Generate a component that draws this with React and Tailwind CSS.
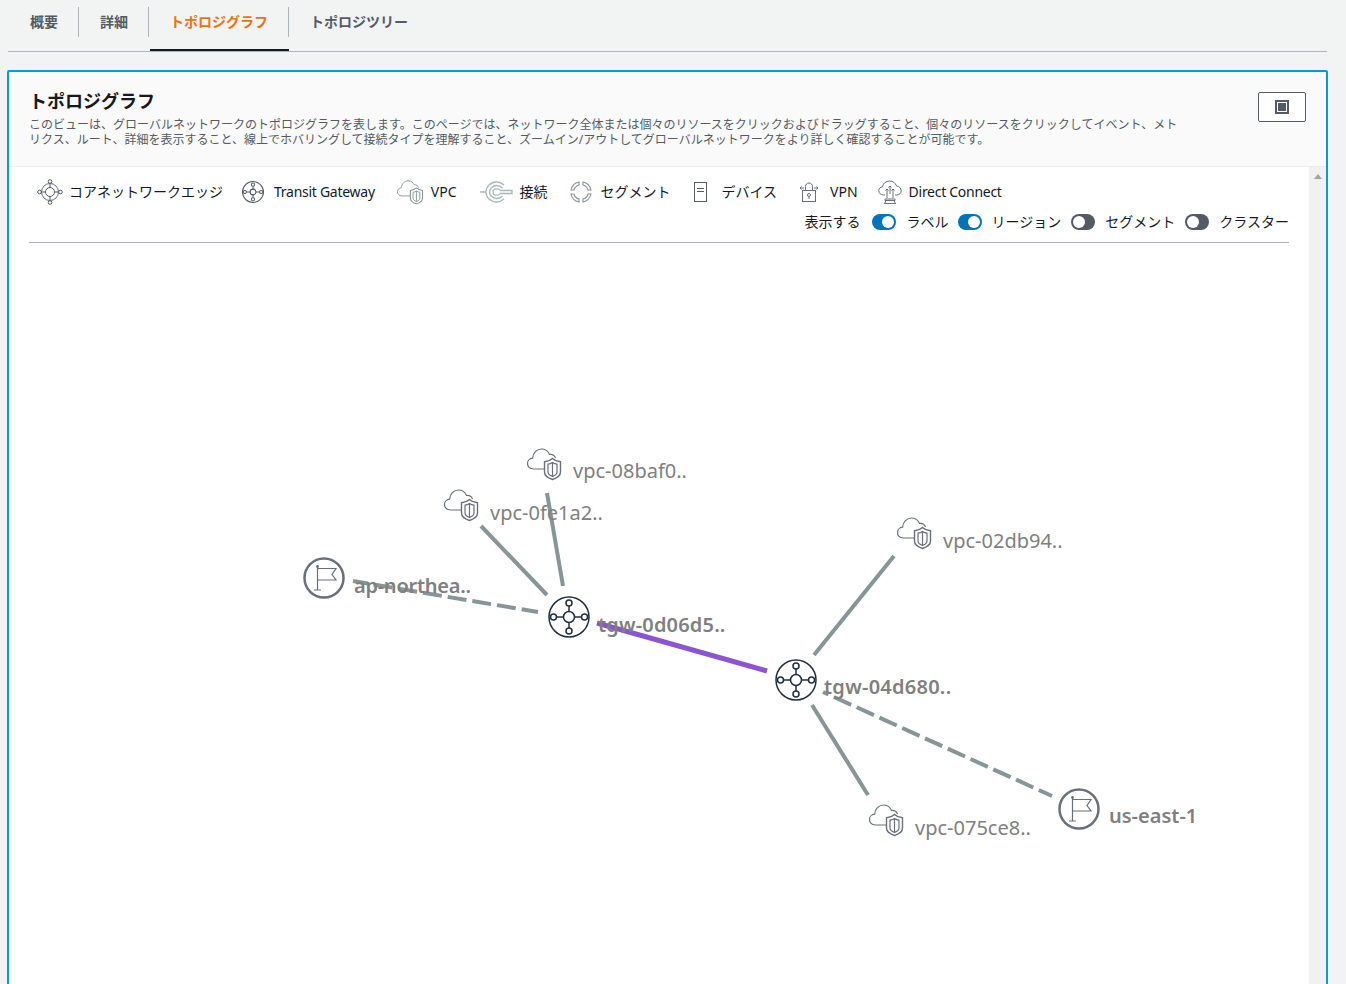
import React from 'react';

const TABS = [
  { label: '概要', pad: 'pl-[21px] pr-[20px]' },
  { label: '詳細', pad: 'pl-[21px] pr-[20px]' },
  { label: 'トポロジグラフ', pad: 'pl-[20px] pr-[20px]', active: true },
  { label: 'トポロジツリー', pad: 'px-[21px]', last: true },
];

const TransitGlyph = ({ stroke = '#232f3e', sw = 1.5 }) => (
  <g fill="none" stroke={stroke} strokeWidth={sw}>
    <circle r="20" />
    <circle r="5.5" />
    <circle cy="-14" r="3" />
    <circle cy="14" r="3" />
    <circle cx="-15.5" r="3" />
    <circle cx="15.5" r="3" />
    <path d="M0-11V-5.5M0 5.5V11M-12.5 0H-5.5M5.5 0H12.5" />
  </g>
);

// cloud with a shield, origin at the top left of a 34x32 box
const VpcGlyph = ({ stroke = '#879596' }) => (
  <g fill="none" stroke={stroke} strokeWidth="1.2">
    <path d="M17 21H6.500C2.500 21 0.500 18.500 0.500 15.500C0.500 12.500 2.800 10.400 5.600 10.200C5.800 5 10 1 14.500 1C18.500 1 21.200 3.400 22.400 6.400C25.500 6 27.500 7.500 28.500 10" />
    <path d="M25.500 10.500C23.500 12.500 20.500 13.500 17.500 13.800V24C17.500 27.500 21 30 25.500 31.500C30 30 33.500 27.500 33.500 24V13.800C30.500 13.500 27.500 12.500 25.500 10.500Z" strokeWidth="1.4" />
    <path d="M25.500 14.500C24 15.500 22.500 16 21 16.200V24C21 26 23 27.500 25.500 28.500C28 27.500 30 26 30 24V16.200C28.500 16 27 15.500 25.500 14.500ZM25.500 14.500V28.500" />
  </g>
);

const FlagGlyph = () => (
  <g fill="none" stroke="#687078">
    <circle r="19.500" strokeWidth="2.500" />
    <path d="M-6.500-11V12M-10 12H-3" strokeWidth="1.200" />
    <circle cx="-6.500" cy="-11.500" r="1.400" fill="#687078" strokeWidth="0" />
    <path d="M-6.500-9.500H12L8-3.500L12 2H-6.500" strokeWidth="1.200" />
  </g>
);

const CoreEdgeIcon = () => (
  <svg width="26" height="26" viewBox="-13 -13 26 26" fill="none" stroke="#545b64" strokeWidth="1">
    <circle r="4.500" />
    <circle r="8.500" stroke="#687078" />
    <g fill="#fff">
      <circle cy="-10.500" r="1.800" />
      <circle cy="10.500" r="1.800" />
      <circle cx="-10.500" r="1.800" />
      <circle cx="10.500" r="1.800" />
    </g>
    <path d="M0-8.500V-4.500M0 4.500V8.500M-8.500 0H-4.500M4.500 0H8.500" />
  </svg>
);

const TransitIcon = () => (
  <svg width="22" height="22" viewBox="-21 -21 42 42">
    <TransitGlyph stroke="#545b64" sw="2" />
  </svg>
);

const VpcIcon = () => (
  <svg width="26" height="25" viewBox="0 0 34 33">
    <VpcGlyph />
  </svg>
);

const ConnectionIcon = () => (
  <svg width="34" height="22" viewBox="0 0 34 22" fill="none" stroke="#aab7b8" strokeWidth="1.300">
    <path d="M1 11H7C7 5.500 11.500 1 17.500 1C20.500 1 23 2.200 25 4M7 11C7 16.500 11.500 21 17.500 21C20.500 21 23 19.800 25 18" />
    <path d="M23.500 7C22 5.200 20 4.500 17.500 4.500C14 4.500 10.500 7.500 10.500 11C10.500 14.500 14 17.500 17.500 17.500C20 17.500 22 16.800 23.500 15" />
    <path d="M21.500 9.500H33V12.500H21.500C20.800 13.500 19.500 14.200 17.500 14.200C15.500 14.200 14 12.700 14 11C14 9.300 15.500 7.800 17.500 7.800C19.500 7.800 20.800 8.500 21.500 9.500Z" />
  </svg>
);

const SegmentIcon = () => (
  <svg width="22" height="22" viewBox="0 0 22 22" fill="none" stroke="#879596" strokeWidth="1.100">
    <path d="M9 1C5 1.800 1.800 5 1 9H4C4.600 6.600 6.600 4.600 9 4ZM13 1C17 1.800 20.200 5 21 9H18C17.400 6.600 15.400 4.600 13 4ZM9 21C5 20.200 1.800 17 1 13H4C4.600 15.400 6.600 17.400 9 18ZM13 21C17 20.200 20.200 17 21 13H18C17.400 15.400 15.400 17.400 13 18Z" />
  </svg>
);

const DeviceIcon = () => (
  <svg width="13" height="20" viewBox="0 0 13 20" fill="none" stroke="#545b64" strokeWidth="1">
    <rect x="0.500" y="0.500" width="12" height="19" />
    <path d="M3 6.500H10M3 9.500H10" />
  </svg>
);

const VpnIcon = () => (
  <svg width="20" height="20" viewBox="0 0 20 20" fill="none" stroke="#687078" strokeWidth="1">
    <rect x="3.500" y="8.500" width="13" height="11" />
    <path d="M6.500 8V4.500C6.500 2.500 8 1 10 1C12 1 13.500 2.500 13.500 4.500V8" />
    <path d="M1 6H5M15 6H19M1 6L2.500 4.500M1 6L2.500 7.500M19 6L17.500 4.500M19 6L17.500 7.500" />
    <circle cx="10" cy="13" r="1.500" />
    <path d="M10 14.500V17" />
  </svg>
);

const DirectConnectIcon = () => (
  <svg width="24" height="24" viewBox="0 0 24 24" fill="none" stroke="#687078" strokeWidth="1">
    <path d="M7 15H5.500C2.800 15 0.800 13.200 0.800 10.800C0.800 8.600 2.400 7 4.500 6.800C5 3.400 8 1 11.500 1C14.800 1 17.500 3 18.500 6C21.200 6.200 23.200 8.200 23.200 10.800C23.200 13.200 21.200 15 18.500 15H17" />
    <path d="M9 9V18M15 9V18M12 6V14M7.500 10.500L9 9L10.500 10.500M13.500 10.500L15 9L16.500 10.500M10.500 7.500L12 6L13.500 7.500" />
    <path d="M7 19H17V20.500H7ZM8 20.500L6.500 23.500H17.500L16 20.500" />
  </svg>
);

const LEGEND = [
  { label: 'コアネットワークエッジ', icon: CoreEdgeIcon, box: 'w-[32px]', gap: 'mr-[19px]' },
  { label: 'Transit Gateway', icon: TransitIcon, box: 'w-[32px]', gap: 'mr-[22px]', text: 'tracking-[-0.27px]' },
  { label: 'VPC', icon: VpcIcon, box: 'w-[34px]', gap: 'mr-[22px]' },
  { label: '接続', icon: ConnectionIcon, box: 'w-[41px]', gap: 'mr-[22px]' },
  { label: 'セグメント', icon: SegmentIcon, box: 'w-[31px]', gap: 'mr-[23px]' },
  { label: 'デバイス', icon: DeviceIcon, box: 'w-[28px]', gap: 'mr-[22px]' },
  { label: 'VPN', icon: VpnIcon, box: 'w-[31px]', gap: 'mr-[20px]' },
  { label: 'Direct Connect', icon: DirectConnectIcon, box: 'w-[31px]', gap: '', text: 'tracking-[-0.28px]' },
];

const TOGGLES = [
  { label: 'ラベル', on: true, gap: 'mr-[9px]', space: 'ml-[11px]' },
  { label: 'リージョン', on: true, gap: 'mr-[10px]', space: 'ml-[10px]' },
  { label: 'セグメント', on: false, gap: 'mr-[10px]', space: 'ml-[10px]' },
  { label: 'クラスター', on: false, gap: '', space: 'ml-[10px]' },
];

const Toggle = ({ on }) => (
  <span className={`flex h-4 w-6 items-center rounded-full px-0.5 ${on ? 'justify-end bg-[#0073bb]' : 'justify-start bg-[#545b64]'}`}>
    <span className="h-3 w-3 rounded-full bg-white" />
  </span>
);

const VPCS = [
  { id: 'vpc-08baf0..', x: 527, y: 448, tx: 573, ty: 478 },
  { id: 'vpc-0fe1a2..', x: 444, y: 489, tx: 490, ty: 520 },
  { id: 'vpc-02db94..', x: 897, y: 517, tx: 943, ty: 548 },
  { id: 'vpc-075ce8..', x: 869, y: 804, tx: 915, ty: 835 },
];

const LINES = [
  { d: 'M547 493L563 586' },
  { d: 'M481 526L547 595' },
  { d: 'M894 556L814 655' },
  { d: 'M812 705L868 795' },
  { d: 'M353 581L538 612', dash: true, offset: 4 },
  { d: 'M823 692L1052 796', dash: true, offset: 13 },
];

const BOLD_LABELS = [
  { text: 'ap-northea..', x: 354, y: 593, spacing: -0.25 },
  { text: 'tgw-0d06d5..', x: 598, y: 632, spacing: 0.17 },
  { text: 'tgw-04d680..', x: 824, y: 694, spacing: 0.25 },
  { text: 'us-east-1', x: 1109, y: 823, spacing: 0 },
];

// the graph is a free canvas, its viewBox uses page coordinates
const TopologyGraph = () => (
  <svg className="block h-full w-full" viewBox="9 243 1300 743" preserveAspectRatio="xMinYMin">
    {LINES.map(l => (
      <path key={l.d} d={l.d} stroke="#879596" strokeWidth="4" strokeDasharray={l.dash ? '19 6' : undefined} strokeDashoffset={l.offset} fill="none" />
    ))}
    <path d="M597 623L767 671" stroke="#8c55d0" strokeWidth="5" />
    <g fontSize="20" fill="#808080">
      {VPCS.map(v => (
        <text key={v.id} x={v.tx} y={v.ty}>{v.id}</text>
      ))}
      {BOLD_LABELS.map(l => (
        <text key={l.text} x={l.x} y={l.y} fontWeight="600" letterSpacing={l.spacing}>{l.text}</text>
      ))}
    </g>
    {VPCS.map(v => (
      <g key={v.id} transform={`translate(${v.x} ${v.y})`}>
        <VpcGlyph stroke="#687078" />
      </g>
    ))}
    <g transform="translate(569 617)"><TransitGlyph /></g>
    <g transform="translate(796 680)"><TransitGlyph /></g>
    <g transform="translate(324 578)"><FlagGlyph /></g>
    <g transform="translate(1079 809)"><FlagGlyph /></g>
  </svg>
);

export default function App() {
  return (
    <div className="h-[984px] w-[1346px] overflow-hidden bg-[#f2f3f3] font-['Noto_Sans','Noto_Sans_CJK_JP',sans-serif] text-[#16191f]">
      <div className="mx-2 flex h-[52px] w-[1319px] items-start border-b border-[#aab7b8] pl-px">
        {TABS.map(t => (
          <div key={t.label} className={`h-[51px] ${t.active ? 'ml-px border-b-2 border-[#16191f]' : ''}`}>
            <div className={`mt-[7px] flex h-[30px] items-center text-sm font-bold ${t.pad} ${t.last ? '' : 'border-r border-[#aab7b8]'} ${t.active ? 'text-[#ec7211]' : 'text-[#545b64]'}`}>
              {t.label}
            </div>
          </div>
        ))}
      </div>

      <div className="ml-[7px] mt-[18px] flex h-[920px] w-[1321px] flex-col rounded-[2px] border-2 border-[#00a1c9] bg-white">
        <div className="flex h-[95px] shrink-0 items-start justify-between border-b border-[#eaeded] bg-[#fafafa] pl-5 pr-5">
          <div className="pt-[17px]">
            <h2 className="text-lg font-bold leading-[25px]">トポロジグラフ</h2>
            <p className="mt-[3px] w-[1160px] text-xs leading-[15px] text-[#545b64]">
              このビューは、グローバルネットワークのトポロジグラフを表します。このページでは、ネットワーク全体または個々のリソースをクリックおよびドラッグすること、個々のリソースをクリックしてイベント、メトリクス、ルート、詳細を表示すること、線上でホバリングして接続タイプを理解すること、ズームイン/アウトしてグローバルネットワークをより詳しく確認することが可能です。
            </p>
          </div>
          <button className="mt-5 flex h-[30px] w-12 items-center justify-center rounded-[2px] border border-[#545b64] bg-white">
            <span className="flex h-[14px] w-[14px] items-center justify-center bg-[#545b64]">
              <span className="h-[10px] w-[10px] border border-white bg-[#545b64]" />
            </span>
          </button>
        </div>

        <div className="flex min-h-0 flex-1">
          <div className="flex min-w-0 flex-1 flex-col">
            <div className="mx-5 flex h-[76px] shrink-0 flex-col border-b border-[#aab7b8]">
              <div className="ml-2 mt-[13px] flex h-6 items-center text-sm">
                {LEGEND.map(({ label, icon: Icon, box, gap, text }) => (
                  <div key={label} className={`flex items-center ${gap}`}>
                    <span className={`flex items-center ${box}`}><Icon /></span>
                    <span className={text}>{label}</span>
                  </div>
                ))}
              </div>
              <div className="mt-[6px] flex h-6 items-center justify-end text-sm">
                <span className="mr-[11px]">表示する</span>
                {TOGGLES.map(t => (
                  <div key={t.label} className={`flex items-center ${t.gap}`}>
                    <Toggle on={t.on} />
                    <span className={t.space}>{t.label}</span>
                  </div>
                ))}
              </div>
            </div>
            <div className="min-h-0 flex-1">
              <TopologyGraph />
            </div>
          </div>
          <div className="flex w-[17px] shrink-0 justify-center bg-[#f1f1f1] pt-[7px]">
            <span className="h-0 w-0 border-x-4 border-b-[5px] border-x-transparent border-b-[#a3a3a3]" />
          </div>
        </div>
      </div>
    </div>
  );
}
